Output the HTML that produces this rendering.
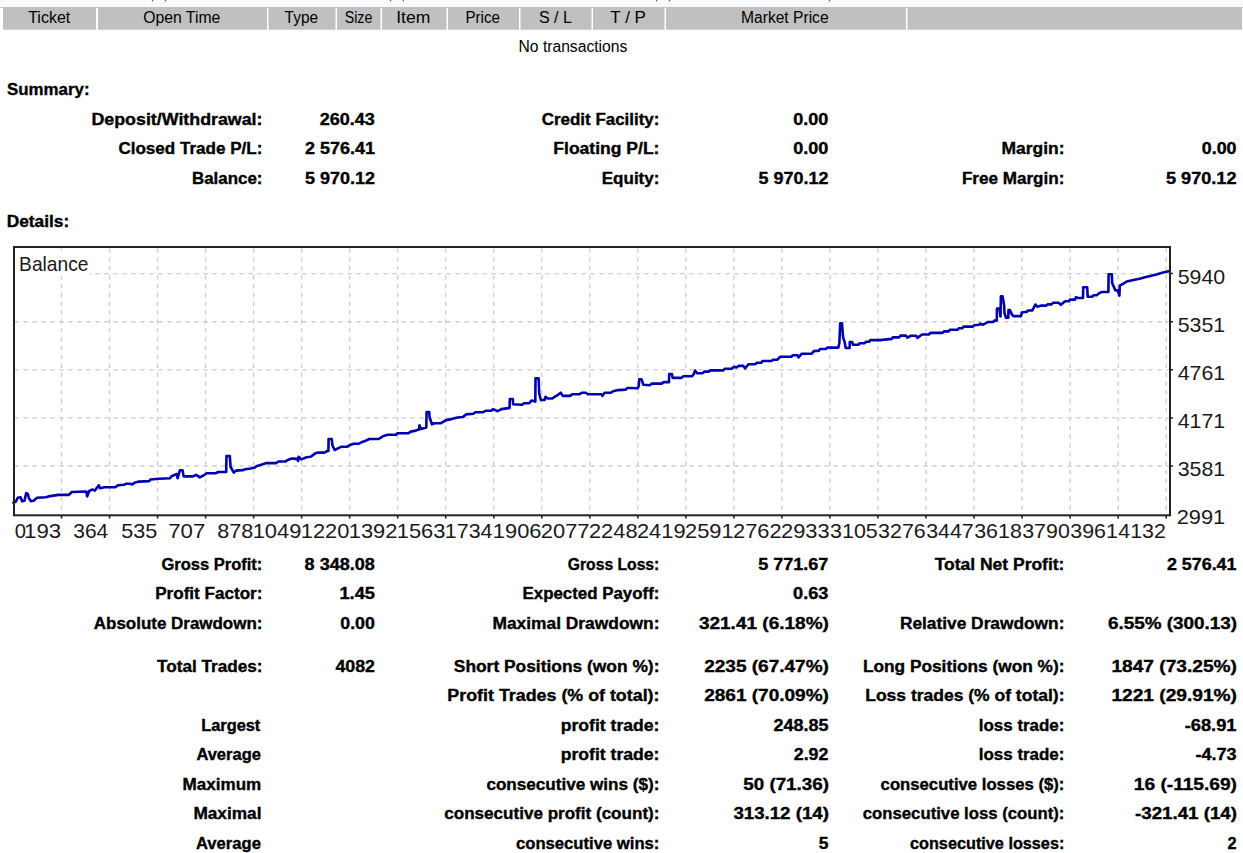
<!DOCTYPE html>
<html><head><meta charset="utf-8"><style>
html,body{margin:0;padding:0;background:#fff;width:1243px;height:853px;overflow:hidden}
svg{display:block;font-family:"Liberation Sans",sans-serif}
</style></head><body>
<svg width="1243" height="853" viewBox="0 0 1243 853">
<rect x="0" y="0" width="1243" height="7" fill="#f8f9fb"/>
<rect x="0" y="7" width="1243" height="1" fill="#c6c6c6"/>
<rect x="151.9" y="0" width="1.2" height="1.3" fill="#555"/>
<rect x="164.9" y="0" width="1.2" height="1.3" fill="#555"/>
<rect x="389.9" y="0" width="1.2" height="1.3" fill="#555"/>
<rect x="402.8" y="0" width="1.2" height="1.3" fill="#555"/>
<rect x="656.0" y="0" width="1.2" height="1.3" fill="#555"/>
<rect x="668.9" y="0" width="1.2" height="1.3" fill="#555"/>
<rect x="828.9" y="0" width="1.2" height="1.3" fill="#555"/>
<rect x="3" y="7" width="93" height="22.7" fill="#c0c0c0"/>
<rect x="98" y="7" width="169" height="22.7" fill="#c0c0c0"/>
<rect x="268.5" y="7" width="67.0" height="22.7" fill="#c0c0c0"/>
<rect x="337" y="7" width="43.5" height="22.7" fill="#c0c0c0"/>
<rect x="382" y="7" width="64.5" height="22.7" fill="#c0c0c0"/>
<rect x="448" y="7" width="71" height="22.7" fill="#c0c0c0"/>
<rect x="520.5" y="7" width="71.0" height="22.7" fill="#c0c0c0"/>
<rect x="593" y="7" width="71.5" height="22.7" fill="#c0c0c0"/>
<rect x="666" y="7" width="240" height="22.7" fill="#c0c0c0"/>
<rect x="907.5" y="7" width="334.5" height="22.7" fill="#c0c0c0"/>
<line x1="61.50" y1="248" x2="61.50" y2="514" stroke="#cecece" stroke-width="1.35" stroke-dasharray="4.43 4.43" stroke-dashoffset="8.45"/>
<line x1="109.53" y1="248" x2="109.53" y2="514" stroke="#cecece" stroke-width="1.35" stroke-dasharray="4.43 4.43" stroke-dashoffset="8.45"/>
<line x1="157.56" y1="248" x2="157.56" y2="514" stroke="#cecece" stroke-width="1.35" stroke-dasharray="4.43 4.43" stroke-dashoffset="8.45"/>
<line x1="205.59" y1="248" x2="205.59" y2="514" stroke="#cecece" stroke-width="1.35" stroke-dasharray="4.43 4.43" stroke-dashoffset="8.45"/>
<line x1="253.62" y1="248" x2="253.62" y2="514" stroke="#cecece" stroke-width="1.35" stroke-dasharray="4.43 4.43" stroke-dashoffset="8.45"/>
<line x1="301.65" y1="248" x2="301.65" y2="514" stroke="#cecece" stroke-width="1.35" stroke-dasharray="4.43 4.43" stroke-dashoffset="8.45"/>
<line x1="349.68" y1="248" x2="349.68" y2="514" stroke="#cecece" stroke-width="1.35" stroke-dasharray="4.43 4.43" stroke-dashoffset="8.45"/>
<line x1="397.71" y1="248" x2="397.71" y2="514" stroke="#cecece" stroke-width="1.35" stroke-dasharray="4.43 4.43" stroke-dashoffset="8.45"/>
<line x1="445.74" y1="248" x2="445.74" y2="514" stroke="#cecece" stroke-width="1.35" stroke-dasharray="4.43 4.43" stroke-dashoffset="8.45"/>
<line x1="493.77" y1="248" x2="493.77" y2="514" stroke="#cecece" stroke-width="1.35" stroke-dasharray="4.43 4.43" stroke-dashoffset="8.45"/>
<line x1="541.80" y1="248" x2="541.80" y2="514" stroke="#cecece" stroke-width="1.35" stroke-dasharray="4.43 4.43" stroke-dashoffset="8.45"/>
<line x1="589.83" y1="248" x2="589.83" y2="514" stroke="#cecece" stroke-width="1.35" stroke-dasharray="4.43 4.43" stroke-dashoffset="8.45"/>
<line x1="637.86" y1="248" x2="637.86" y2="514" stroke="#cecece" stroke-width="1.35" stroke-dasharray="4.43 4.43" stroke-dashoffset="8.45"/>
<line x1="685.89" y1="248" x2="685.89" y2="514" stroke="#cecece" stroke-width="1.35" stroke-dasharray="4.43 4.43" stroke-dashoffset="8.45"/>
<line x1="733.92" y1="248" x2="733.92" y2="514" stroke="#cecece" stroke-width="1.35" stroke-dasharray="4.43 4.43" stroke-dashoffset="8.45"/>
<line x1="781.95" y1="248" x2="781.95" y2="514" stroke="#cecece" stroke-width="1.35" stroke-dasharray="4.43 4.43" stroke-dashoffset="8.45"/>
<line x1="829.98" y1="248" x2="829.98" y2="514" stroke="#cecece" stroke-width="1.35" stroke-dasharray="4.43 4.43" stroke-dashoffset="8.45"/>
<line x1="878.01" y1="248" x2="878.01" y2="514" stroke="#cecece" stroke-width="1.35" stroke-dasharray="4.43 4.43" stroke-dashoffset="8.45"/>
<line x1="926.04" y1="248" x2="926.04" y2="514" stroke="#cecece" stroke-width="1.35" stroke-dasharray="4.43 4.43" stroke-dashoffset="8.45"/>
<line x1="974.07" y1="248" x2="974.07" y2="514" stroke="#cecece" stroke-width="1.35" stroke-dasharray="4.43 4.43" stroke-dashoffset="8.45"/>
<line x1="1022.10" y1="248" x2="1022.10" y2="514" stroke="#cecece" stroke-width="1.35" stroke-dasharray="4.43 4.43" stroke-dashoffset="8.45"/>
<line x1="1070.13" y1="248" x2="1070.13" y2="514" stroke="#cecece" stroke-width="1.35" stroke-dasharray="4.43 4.43" stroke-dashoffset="8.45"/>
<line x1="1118.16" y1="248" x2="1118.16" y2="514" stroke="#cecece" stroke-width="1.35" stroke-dasharray="4.43 4.43" stroke-dashoffset="8.45"/>
<line x1="1166.19" y1="248" x2="1166.19" y2="514" stroke="#cecece" stroke-width="1.35" stroke-dasharray="4.43 4.43" stroke-dashoffset="8.45"/>
<line x1="15" y1="273.60" x2="1169" y2="273.60" stroke="#cecece" stroke-width="1.35" stroke-dasharray="4.5 4.5" stroke-dashoffset="0.75"/>
<line x1="15" y1="321.70" x2="1169" y2="321.70" stroke="#cecece" stroke-width="1.35" stroke-dasharray="4.5 4.5" stroke-dashoffset="0.75"/>
<line x1="15" y1="369.80" x2="1169" y2="369.80" stroke="#cecece" stroke-width="1.35" stroke-dasharray="4.5 4.5" stroke-dashoffset="0.75"/>
<line x1="15" y1="417.90" x2="1169" y2="417.90" stroke="#cecece" stroke-width="1.35" stroke-dasharray="4.5 4.5" stroke-dashoffset="0.75"/>
<line x1="15" y1="466.00" x2="1169" y2="466.00" stroke="#cecece" stroke-width="1.35" stroke-dasharray="4.5 4.5" stroke-dashoffset="0.75"/>
<line x1="61.50" y1="516" x2="61.50" y2="518.5" stroke="#222" stroke-width="1.6"/>
<line x1="109.53" y1="516" x2="109.53" y2="518.5" stroke="#222" stroke-width="1.6"/>
<line x1="157.56" y1="516" x2="157.56" y2="518.5" stroke="#222" stroke-width="1.6"/>
<line x1="205.59" y1="516" x2="205.59" y2="518.5" stroke="#222" stroke-width="1.6"/>
<line x1="253.62" y1="516" x2="253.62" y2="518.5" stroke="#222" stroke-width="1.6"/>
<line x1="301.65" y1="516" x2="301.65" y2="518.5" stroke="#222" stroke-width="1.6"/>
<line x1="349.68" y1="516" x2="349.68" y2="518.5" stroke="#222" stroke-width="1.6"/>
<line x1="397.71" y1="516" x2="397.71" y2="518.5" stroke="#222" stroke-width="1.6"/>
<line x1="445.74" y1="516" x2="445.74" y2="518.5" stroke="#222" stroke-width="1.6"/>
<line x1="493.77" y1="516" x2="493.77" y2="518.5" stroke="#222" stroke-width="1.6"/>
<line x1="541.80" y1="516" x2="541.80" y2="518.5" stroke="#222" stroke-width="1.6"/>
<line x1="589.83" y1="516" x2="589.83" y2="518.5" stroke="#222" stroke-width="1.6"/>
<line x1="637.86" y1="516" x2="637.86" y2="518.5" stroke="#222" stroke-width="1.6"/>
<line x1="685.89" y1="516" x2="685.89" y2="518.5" stroke="#222" stroke-width="1.6"/>
<line x1="733.92" y1="516" x2="733.92" y2="518.5" stroke="#222" stroke-width="1.6"/>
<line x1="781.95" y1="516" x2="781.95" y2="518.5" stroke="#222" stroke-width="1.6"/>
<line x1="829.98" y1="516" x2="829.98" y2="518.5" stroke="#222" stroke-width="1.6"/>
<line x1="878.01" y1="516" x2="878.01" y2="518.5" stroke="#222" stroke-width="1.6"/>
<line x1="926.04" y1="516" x2="926.04" y2="518.5" stroke="#222" stroke-width="1.6"/>
<line x1="974.07" y1="516" x2="974.07" y2="518.5" stroke="#222" stroke-width="1.6"/>
<line x1="1022.10" y1="516" x2="1022.10" y2="518.5" stroke="#222" stroke-width="1.6"/>
<line x1="1070.13" y1="516" x2="1070.13" y2="518.5" stroke="#222" stroke-width="1.6"/>
<line x1="1118.16" y1="516" x2="1118.16" y2="518.5" stroke="#222" stroke-width="1.6"/>
<line x1="1166.19" y1="516" x2="1166.19" y2="518.5" stroke="#222" stroke-width="1.6"/>
<line x1="1171" y1="273.60" x2="1173" y2="273.60" stroke="#222" stroke-width="1.5"/>
<line x1="1171" y1="321.70" x2="1173" y2="321.70" stroke="#222" stroke-width="1.5"/>
<line x1="1171" y1="369.80" x2="1173" y2="369.80" stroke="#222" stroke-width="1.5"/>
<line x1="1171" y1="417.90" x2="1173" y2="417.90" stroke="#222" stroke-width="1.5"/>
<line x1="1171" y1="466.00" x2="1173" y2="466.00" stroke="#222" stroke-width="1.5"/>
<rect x="15" y="250.5" width="74.5" height="25.5" fill="#fff"/>
<polyline points="13.4,502.6 15.8,501.7 17.7,497.8 20.6,497.3 22.1,501.2 24.5,500.7 26.2,493 27.9,494 28.8,497.8 30.8,501.2 33.6,500.7 37,497.8 45.7,497.3 48.6,496.4 58.3,494.9 68.9,494.9 71.8,492 86.3,491.5 87.2,496.4 89.2,491 92,489.6 94.9,490.6 96.9,487.7 98.8,485.3 99.8,488.2 104.6,487.2 115.2,487.2 118.1,485.3 123.9,484.8 125.8,483.8 130,483.8 132.3,484.5 134.4,482.7 139.1,481.6 149.1,481.1 150.6,479.5 158.5,478.7 170,478.3 171.5,476.2 176.8,474 177.6,478.3 179.9,470.3 182.6,470.3 183.6,476.4 193,476.4 196.1,474.8 199.8,477.4 204.5,474.8 206.6,473.2 216,473.2 218.1,472 226.2,472 226.5,456 229.8,456 230.6,467 233.8,472.7 235.9,470.6 243.2,470.1 245.3,469.3 250.5,468.5 255,467.5 256.3,466.2 263.6,464.1 265.7,463.1 276.2,463.1 278.2,461.5 285.6,461.5 287.7,459.9 291.8,458.6 297.1,458.9 298.1,461 298.6,456.8 301.3,459.4 306.5,457.3 310.7,456.8 314.9,453.6 318,452.6 324.3,452.6 327.4,451 328.4,451 328.6,439 331.8,439 332.4,445.3 334.7,450 337.9,448.4 341,446.8 347.3,446.8 349.4,445.3 353.6,443.7 358.8,443.7 361.9,442.1 365.1,441.1 369.2,439 378.7,439 382.8,436.3 387.6,434.7 395.9,434.7 397.5,433.2 408.5,433.2 410.6,431.6 415.8,430.6 418.9,429.5 419.5,425.3 421,429 426.3,427.4 426.6,412 429.2,412 429.6,417.5 432,424.3 434.6,423.2 440.9,423.2 446.1,420.1 451.4,419.1 457.6,417.5 462.9,417 466,414.4 473.3,413.8 475.4,412.3 482.7,412.3 485.9,410.7 491.1,410.7 493.2,409.1 497.4,411.2 501.6,409.1 505,408.6 509.6,407.9 509.8,399 512.8,399 513.1,404.2 522,404.7 524.1,403.2 529.3,403.2 531.4,400.6 535.3,401.6 535.5,378.2 538.6,378.2 539.2,393.2 540.8,400 544.5,400 545.5,396.9 547.6,398.5 552.3,398.5 555.4,396.4 558.1,394.8 560.7,392.7 562.8,395.9 570.1,395.9 572.2,394.3 579.5,394.3 581.6,392.7 585.8,392.7 587.9,394.3 601.5,394.3 602.5,395.9 604.6,392.7 610.9,392.7 613,391.2 618.2,390.1 625.5,389.6 627.6,388 630,388 637.6,388.3 638.8,386 639.2,379.4 641.6,379.4 643.3,384.7 650.1,385.2 651.7,383.6 661.6,383.6 663.7,382.1 669,382.1 669.2,374 672,374 672.6,377.9 681.5,377.9 683.1,376.3 692,376.3 694,373.7 695.1,370.5 697.2,373.2 702.4,373.2 704.5,371.6 708.7,371.6 710.3,370.4 723.3,370.4 724.9,368.7 731.7,368.7 733.8,366.9 736.9,367.4 738.5,365.9 743.2,365.9 745.3,368.3 748.4,364.3 755,364.3 756.8,362.9 761.5,362.6 762.6,361 771.4,361 773,359.8 777.2,359.8 780.3,356.8 791.3,356.8 792.9,355.3 797.6,355.3 798.6,357.4 801.8,353.7 811.7,353.7 813.8,351.1 819,350.6 820.1,349 825.8,349 827.4,347.6 838.4,347.6 839.4,342.7 840.2,323.4 842,323.4 843.1,337.5 844.7,342.2 845.7,348 849.6,348 849.8,342 852.2,342 853,344.8 858.3,344.8 859.8,343.2 864.5,343.2 866.1,341.7 869.2,341.7 870.3,340.1 880,340.1 891.7,338.9 892.8,337.4 899.1,337.4 900.6,335.6 905.9,335.6 907.4,337.7 910.6,335.8 916.3,335.8 917.4,337.9 922.1,334.5 928.9,334.5 930.4,332.9 942.5,332.9 944,331.4 948.7,331.4 949.8,329.7 957.6,329.7 958.7,328.3 962.3,328.3 963.4,326.6 972.8,326.6 974.4,325.3 979.1,324.8 980.1,323.6 982.7,324.8 985.9,323.2 988,322 993.2,322 994.2,320.6 996.2,320.6 996.8,320.5 997,308.6 999.6,308.6 1000.5,316.5 1000.9,296.2 1002.5,296.2 1004.1,305.2 1004.5,313.3 1006.1,317.7 1008.3,317.7 1008.5,310 1009.9,310 1011.7,314.1 1013.3,316.1 1021,316.1 1021.8,312.5 1027,311.7 1027.8,310.5 1032.2,310.5 1033.8,307.6 1035.5,304.5 1037.5,306.8 1040.7,305.6 1046.3,305.6 1047.5,304.4 1051.5,304.4 1053.2,302.8 1058.8,302.8 1060.8,304.8 1063.6,302.4 1065.6,301.2 1068.8,301.2 1070,299.6 1074.9,299.6 1076.1,297.2 1077.7,298 1083,298 1083.2,287.3 1087.2,287.3 1087.7,296.8 1090,296.8 1092.1,296.8 1093.7,295.2 1096.9,295.2 1098.5,293.6 1101.7,292 1108.4,292 1108.6,274.2 1111.8,274.2 1112.2,283.2 1115.4,290.4 1117.8,290.4 1119.4,295.6 1119.8,285.6 1123.4,283.6 1126.7,281.5 1132.3,280.3 1139.5,278.7 1146,277.1 1152.4,275.5 1157.2,274.3 1162.1,272.7 1169.6,271.1" fill="none" stroke="#0000b0" stroke-width="2.6" stroke-linejoin="round" stroke-linecap="round"/>
<rect x="14" y="247" width="1156" height="268.3" fill="none" stroke="#222" stroke-width="2"/>
<text x="28.20" y="22.90" font-size="16" font-weight="normal" fill="#000" textLength="42.05" lengthAdjust="spacingAndGlyphs">Ticket</text>
<text x="143.20" y="22.90" font-size="16" font-weight="normal" fill="#000" textLength="77.10" lengthAdjust="spacingAndGlyphs">Open Time</text>
<text x="284.60" y="22.90" font-size="16" font-weight="normal" fill="#000" textLength="33.50" lengthAdjust="spacingAndGlyphs">Type</text>
<text x="344.70" y="22.90" font-size="16" font-weight="normal" fill="#000" textLength="27.61" lengthAdjust="spacingAndGlyphs">Size</text>
<text x="396.21" y="22.90" font-size="16" font-weight="normal" fill="#000" textLength="34.05" lengthAdjust="spacingAndGlyphs">Item</text>
<text x="465.45" y="22.90" font-size="16" font-weight="normal" fill="#000" textLength="34.45" lengthAdjust="spacingAndGlyphs">Price</text>
<text x="538.90" y="22.90" font-size="16" font-weight="normal" fill="#000" textLength="33.00" lengthAdjust="spacingAndGlyphs">S / L</text>
<text x="610.30" y="22.90" font-size="16" font-weight="normal" fill="#000" textLength="35.71" lengthAdjust="spacingAndGlyphs">T / P</text>
<text x="741.02" y="22.90" font-size="16" font-weight="normal" fill="#000" textLength="87.58" lengthAdjust="spacingAndGlyphs">Market Price</text>
<text x="518.52" y="51.90" font-size="16" font-weight="normal" fill="#000" textLength="108.78" lengthAdjust="spacingAndGlyphs">No transactions</text>
<text x="7.10" y="94.90" font-size="16" font-weight="bold" fill="#000" stroke="#000" stroke-width="0.35" textLength="82.40" lengthAdjust="spacingAndGlyphs">Summary:</text>
<text x="6.72" y="227.00" font-size="16" font-weight="bold" fill="#000" stroke="#000" stroke-width="0.35" textLength="62.41" lengthAdjust="spacingAndGlyphs">Details:</text>
<text x="91.49" y="124.60" font-size="16" font-weight="bold" fill="#000" stroke="#000" stroke-width="0.35" textLength="170.99" lengthAdjust="spacingAndGlyphs">Deposit/Withdrawal:</text>
<text x="319.80" y="124.60" font-size="16" font-weight="bold" fill="#000" stroke="#000" stroke-width="0.35" textLength="55.09" lengthAdjust="spacingAndGlyphs">260.43</text>
<text x="541.80" y="124.60" font-size="16" font-weight="bold" fill="#000" stroke="#000" stroke-width="0.35" textLength="117.61" lengthAdjust="spacingAndGlyphs">Credit Facility:</text>
<text x="793.30" y="124.60" font-size="16" font-weight="bold" fill="#000" stroke="#000" stroke-width="0.35" textLength="35.09" lengthAdjust="spacingAndGlyphs">0.00</text>
<text x="118.40" y="154.00" font-size="16" font-weight="bold" fill="#000" stroke="#000" stroke-width="0.35" textLength="144.02" lengthAdjust="spacingAndGlyphs">Closed Trade P/L:</text>
<text x="305.00" y="154.00" font-size="16" font-weight="bold" fill="#000" stroke="#000" stroke-width="0.35" textLength="69.89" lengthAdjust="spacingAndGlyphs">2 576.41</text>
<text x="553.30" y="154.00" font-size="16" font-weight="bold" fill="#000" stroke="#000" stroke-width="0.35" textLength="106.15" lengthAdjust="spacingAndGlyphs">Floating P/L:</text>
<text x="793.30" y="154.00" font-size="16" font-weight="bold" fill="#000" stroke="#000" stroke-width="0.35" textLength="35.09" lengthAdjust="spacingAndGlyphs">0.00</text>
<text x="1001.51" y="154.00" font-size="16" font-weight="bold" fill="#000" stroke="#000" stroke-width="0.35" textLength="62.94" lengthAdjust="spacingAndGlyphs">Margin:</text>
<text x="1201.80" y="154.00" font-size="16" font-weight="bold" fill="#000" stroke="#000" stroke-width="0.35" textLength="34.69" lengthAdjust="spacingAndGlyphs">0.00</text>
<text x="192.05" y="183.60" font-size="16" font-weight="bold" fill="#000" stroke="#000" stroke-width="0.35" textLength="70.36" lengthAdjust="spacingAndGlyphs">Balance:</text>
<text x="305.00" y="183.60" font-size="16" font-weight="bold" fill="#000" stroke="#000" stroke-width="0.35" textLength="69.89" lengthAdjust="spacingAndGlyphs">5 970.12</text>
<text x="601.74" y="183.60" font-size="16" font-weight="bold" fill="#000" stroke="#000" stroke-width="0.35" textLength="57.68" lengthAdjust="spacingAndGlyphs">Equity:</text>
<text x="758.50" y="183.60" font-size="16" font-weight="bold" fill="#000" stroke="#000" stroke-width="0.35" textLength="69.89" lengthAdjust="spacingAndGlyphs">5 970.12</text>
<text x="961.93" y="183.60" font-size="16" font-weight="bold" fill="#000" stroke="#000" stroke-width="0.35" textLength="102.48" lengthAdjust="spacingAndGlyphs">Free Margin:</text>
<text x="1166.00" y="183.60" font-size="16" font-weight="bold" fill="#000" stroke="#000" stroke-width="0.35" textLength="70.49" lengthAdjust="spacingAndGlyphs">5 970.12</text>
<text x="161.50" y="569.50" font-size="16" font-weight="bold" fill="#000" stroke="#000" stroke-width="0.35" textLength="100.87" lengthAdjust="spacingAndGlyphs">Gross Profit:</text>
<text x="304.60" y="569.50" font-size="16" font-weight="bold" fill="#000" stroke="#000" stroke-width="0.35" textLength="70.29" lengthAdjust="spacingAndGlyphs">8 348.08</text>
<text x="567.80" y="569.50" font-size="16" font-weight="bold" fill="#000" stroke="#000" stroke-width="0.35" textLength="91.50" lengthAdjust="spacingAndGlyphs">Gross Loss:</text>
<text x="758.30" y="569.50" font-size="16" font-weight="bold" fill="#000" stroke="#000" stroke-width="0.35" textLength="70.09" lengthAdjust="spacingAndGlyphs">5 771.67</text>
<text x="934.70" y="569.50" font-size="16" font-weight="bold" fill="#000" stroke="#000" stroke-width="0.35" textLength="129.75" lengthAdjust="spacingAndGlyphs">Total Net Profit:</text>
<text x="1166.90" y="569.50" font-size="16" font-weight="bold" fill="#000" stroke="#000" stroke-width="0.35" textLength="69.59" lengthAdjust="spacingAndGlyphs">2 576.41</text>
<text x="155.23" y="598.90" font-size="16" font-weight="bold" fill="#000" stroke="#000" stroke-width="0.35" textLength="107.18" lengthAdjust="spacingAndGlyphs">Profit Factor:</text>
<text x="339.46" y="598.90" font-size="16" font-weight="bold" fill="#000" stroke="#000" stroke-width="0.35" textLength="35.42" lengthAdjust="spacingAndGlyphs">1.45</text>
<text x="522.55" y="598.90" font-size="16" font-weight="bold" fill="#000" stroke="#000" stroke-width="0.35" textLength="136.85" lengthAdjust="spacingAndGlyphs">Expected Payoff:</text>
<text x="793.10" y="598.90" font-size="16" font-weight="bold" fill="#000" stroke="#000" stroke-width="0.35" textLength="35.28" lengthAdjust="spacingAndGlyphs">0.63</text>
<text x="93.80" y="628.80" font-size="16" font-weight="bold" fill="#000" stroke="#000" stroke-width="0.35" textLength="168.61" lengthAdjust="spacingAndGlyphs">Absolute Drawdown:</text>
<text x="340.30" y="628.80" font-size="16" font-weight="bold" fill="#000" stroke="#000" stroke-width="0.35" textLength="34.59" lengthAdjust="spacingAndGlyphs">0.00</text>
<text x="492.41" y="628.80" font-size="16" font-weight="bold" fill="#000" stroke="#000" stroke-width="0.35" textLength="167.03" lengthAdjust="spacingAndGlyphs">Maximal Drawdown:</text>
<text x="698.90" y="628.80" font-size="16" font-weight="bold" fill="#000" stroke="#000" stroke-width="0.35" textLength="129.99" lengthAdjust="spacingAndGlyphs">321.41 (6.18%)</text>
<text x="899.92" y="628.80" font-size="16" font-weight="bold" fill="#000" stroke="#000" stroke-width="0.35" textLength="164.52" lengthAdjust="spacingAndGlyphs">Relative Drawdown:</text>
<text x="1107.90" y="628.80" font-size="16" font-weight="bold" fill="#000" stroke="#000" stroke-width="0.35" textLength="129.09" lengthAdjust="spacingAndGlyphs">6.55% (300.13)</text>
<text x="157.10" y="671.50" font-size="16" font-weight="bold" fill="#000" stroke="#000" stroke-width="0.35" textLength="105.32" lengthAdjust="spacingAndGlyphs">Total Trades:</text>
<text x="335.40" y="671.50" font-size="16" font-weight="bold" fill="#000" stroke="#000" stroke-width="0.35" textLength="39.49" lengthAdjust="spacingAndGlyphs">4082</text>
<text x="453.80" y="671.50" font-size="16" font-weight="bold" fill="#000" stroke="#000" stroke-width="0.35" textLength="205.64" lengthAdjust="spacingAndGlyphs">Short Positions (won %):</text>
<text x="704.20" y="671.50" font-size="16" font-weight="bold" fill="#000" stroke="#000" stroke-width="0.35" textLength="124.69" lengthAdjust="spacingAndGlyphs">2235 (67.47%)</text>
<text x="862.92" y="671.50" font-size="16" font-weight="bold" fill="#000" stroke="#000" stroke-width="0.35" textLength="201.51" lengthAdjust="spacingAndGlyphs">Long Positions (won %):</text>
<text x="1111.40" y="671.50" font-size="16" font-weight="bold" fill="#000" stroke="#000" stroke-width="0.35" textLength="125.59" lengthAdjust="spacingAndGlyphs">1847 (73.25%)</text>
<text x="447.39" y="701.00" font-size="16" font-weight="bold" fill="#000" stroke="#000" stroke-width="0.35" textLength="212.10" lengthAdjust="spacingAndGlyphs">Profit Trades (% of total):</text>
<text x="704.20" y="701.00" font-size="16" font-weight="bold" fill="#000" stroke="#000" stroke-width="0.35" textLength="124.69" lengthAdjust="spacingAndGlyphs">2861 (70.09%)</text>
<text x="865.21" y="701.00" font-size="16" font-weight="bold" fill="#000" stroke="#000" stroke-width="0.35" textLength="199.25" lengthAdjust="spacingAndGlyphs">Loss trades (% of total):</text>
<text x="1111.40" y="701.00" font-size="16" font-weight="bold" fill="#000" stroke="#000" stroke-width="0.35" textLength="125.59" lengthAdjust="spacingAndGlyphs">1221 (29.91%)</text>
<text x="201.18" y="730.50" font-size="16" font-weight="bold" fill="#000" stroke="#000" stroke-width="0.35" textLength="59.14" lengthAdjust="spacingAndGlyphs">Largest</text>
<text x="560.70" y="730.50" font-size="16" font-weight="bold" fill="#000" stroke="#000" stroke-width="0.35" textLength="98.76" lengthAdjust="spacingAndGlyphs">profit trade:</text>
<text x="773.50" y="730.50" font-size="16" font-weight="bold" fill="#000" stroke="#000" stroke-width="0.35" textLength="54.89" lengthAdjust="spacingAndGlyphs">248.85</text>
<text x="978.84" y="730.50" font-size="16" font-weight="bold" fill="#000" stroke="#000" stroke-width="0.35" textLength="85.56" lengthAdjust="spacingAndGlyphs">loss trade:</text>
<text x="1184.70" y="730.50" font-size="16" font-weight="bold" fill="#000" stroke="#000" stroke-width="0.35" textLength="51.78" lengthAdjust="spacingAndGlyphs">-68.91</text>
<text x="196.40" y="760.00" font-size="16" font-weight="bold" fill="#000" stroke="#000" stroke-width="0.35" textLength="64.50" lengthAdjust="spacingAndGlyphs">Average</text>
<text x="560.70" y="760.00" font-size="16" font-weight="bold" fill="#000" stroke="#000" stroke-width="0.35" textLength="98.76" lengthAdjust="spacingAndGlyphs">profit trade:</text>
<text x="793.80" y="760.00" font-size="16" font-weight="bold" fill="#000" stroke="#000" stroke-width="0.35" textLength="34.59" lengthAdjust="spacingAndGlyphs">2.92</text>
<text x="978.84" y="760.00" font-size="16" font-weight="bold" fill="#000" stroke="#000" stroke-width="0.35" textLength="85.56" lengthAdjust="spacingAndGlyphs">loss trade:</text>
<text x="1195.40" y="760.00" font-size="16" font-weight="bold" fill="#000" stroke="#000" stroke-width="0.35" textLength="41.09" lengthAdjust="spacingAndGlyphs">-4.73</text>
<text x="182.63" y="789.50" font-size="16" font-weight="bold" fill="#000" stroke="#000" stroke-width="0.35" textLength="78.61" lengthAdjust="spacingAndGlyphs">Maximum</text>
<text x="486.40" y="789.50" font-size="16" font-weight="bold" fill="#000" stroke="#000" stroke-width="0.35" textLength="173.02" lengthAdjust="spacingAndGlyphs">consecutive wins ($):</text>
<text x="743.30" y="789.50" font-size="16" font-weight="bold" fill="#000" stroke="#000" stroke-width="0.35" textLength="85.59" lengthAdjust="spacingAndGlyphs">50 (71.36)</text>
<text x="880.60" y="789.50" font-size="16" font-weight="bold" fill="#000" stroke="#000" stroke-width="0.35" textLength="183.79" lengthAdjust="spacingAndGlyphs">consecutive losses ($):</text>
<text x="1133.80" y="789.50" font-size="16" font-weight="bold" fill="#000" stroke="#000" stroke-width="0.35" textLength="103.19" lengthAdjust="spacingAndGlyphs">16 (-115.69)</text>
<text x="193.42" y="819.00" font-size="16" font-weight="bold" fill="#000" stroke="#000" stroke-width="0.35" textLength="68.06" lengthAdjust="spacingAndGlyphs">Maximal</text>
<text x="444.30" y="819.00" font-size="16" font-weight="bold" fill="#000" stroke="#000" stroke-width="0.35" textLength="215.12" lengthAdjust="spacingAndGlyphs">consecutive profit (count):</text>
<text x="733.40" y="819.00" font-size="16" font-weight="bold" fill="#000" stroke="#000" stroke-width="0.35" textLength="95.48" lengthAdjust="spacingAndGlyphs">313.12 (14)</text>
<text x="862.80" y="819.00" font-size="16" font-weight="bold" fill="#000" stroke="#000" stroke-width="0.35" textLength="201.59" lengthAdjust="spacingAndGlyphs">consecutive loss (count):</text>
<text x="1135.00" y="819.00" font-size="16" font-weight="bold" fill="#000" stroke="#000" stroke-width="0.35" textLength="101.98" lengthAdjust="spacingAndGlyphs">-321.41 (14)</text>
<text x="196.00" y="848.50" font-size="16" font-weight="bold" fill="#000" stroke="#000" stroke-width="0.35" textLength="64.89" lengthAdjust="spacingAndGlyphs">Average</text>
<text x="516.00" y="848.50" font-size="16" font-weight="bold" fill="#000" stroke="#000" stroke-width="0.35" textLength="143.38" lengthAdjust="spacingAndGlyphs">consecutive wins:</text>
<text x="818.70" y="848.50" font-size="16" font-weight="bold" fill="#000" stroke="#000" stroke-width="0.35" textLength="9.69" lengthAdjust="spacingAndGlyphs">5</text>
<text x="910.00" y="848.50" font-size="16" font-weight="bold" fill="#000" stroke="#000" stroke-width="0.35" textLength="154.35" lengthAdjust="spacingAndGlyphs">consecutive losses:</text>
<text x="1227.40" y="848.50" font-size="16" font-weight="bold" fill="#000" stroke="#000" stroke-width="0.35" textLength="9.10" lengthAdjust="spacingAndGlyphs">2</text>
<text x="19.09" y="271.30" font-size="21" font-weight="normal" fill="#1a1a1a" textLength="69.33" lengthAdjust="spacingAndGlyphs">Balance</text>
<text x="1177.70" y="283.50" font-size="21" font-weight="normal" fill="#1a1a1a" textLength="47.49" lengthAdjust="spacingAndGlyphs">5940</text>
<text x="1177.70" y="331.60" font-size="21" font-weight="normal" fill="#1a1a1a" textLength="47.49" lengthAdjust="spacingAndGlyphs">5351</text>
<text x="1177.70" y="379.70" font-size="21" font-weight="normal" fill="#1a1a1a" textLength="47.49" lengthAdjust="spacingAndGlyphs">4761</text>
<text x="1177.70" y="427.80" font-size="21" font-weight="normal" fill="#1a1a1a" textLength="47.49" lengthAdjust="spacingAndGlyphs">4171</text>
<text x="1177.70" y="475.90" font-size="21" font-weight="normal" fill="#1a1a1a" textLength="47.49" lengthAdjust="spacingAndGlyphs">3581</text>
<text x="1176.66" y="524.00" font-size="21" font-weight="normal" fill="#1a1a1a" textLength="48.54" lengthAdjust="spacingAndGlyphs">2991</text>
<text x="14.80" y="538.10" font-size="21" font-weight="normal" fill="#1a1a1a" textLength="11.25" lengthAdjust="spacingAndGlyphs">0</text>
<text x="24.14" y="538.10" font-size="21" font-weight="normal" fill="#1a1a1a" textLength="37.08" lengthAdjust="spacingAndGlyphs">193</text>
<text x="73.23" y="538.10" font-size="21" font-weight="normal" fill="#1a1a1a" textLength="34.98" lengthAdjust="spacingAndGlyphs">364</text>
<text x="121.26" y="538.10" font-size="21" font-weight="normal" fill="#1a1a1a" textLength="36.00" lengthAdjust="spacingAndGlyphs">535</text>
<text x="168.23" y="538.10" font-size="21" font-weight="normal" fill="#1a1a1a" textLength="37.08" lengthAdjust="spacingAndGlyphs">707</text>
<text x="217.32" y="538.10" font-size="21" font-weight="normal" fill="#1a1a1a" textLength="36.00" lengthAdjust="spacingAndGlyphs">878</text>
<text x="252.71" y="538.10" font-size="21" font-weight="normal" fill="#1a1a1a" textLength="48.65" lengthAdjust="spacingAndGlyphs">1049</text>
<text x="300.74" y="538.10" font-size="21" font-weight="normal" fill="#1a1a1a" textLength="48.65" lengthAdjust="spacingAndGlyphs">1220</text>
<text x="348.77" y="538.10" font-size="21" font-weight="normal" fill="#1a1a1a" textLength="48.65" lengthAdjust="spacingAndGlyphs">1392</text>
<text x="396.80" y="538.10" font-size="21" font-weight="normal" fill="#1a1a1a" textLength="48.65" lengthAdjust="spacingAndGlyphs">1563</text>
<text x="444.85" y="538.10" font-size="21" font-weight="normal" fill="#1a1a1a" textLength="47.59" lengthAdjust="spacingAndGlyphs">1734</text>
<text x="492.86" y="538.10" font-size="21" font-weight="normal" fill="#1a1a1a" textLength="48.65" lengthAdjust="spacingAndGlyphs">1906</text>
<text x="540.89" y="538.10" font-size="21" font-weight="normal" fill="#1a1a1a" textLength="48.65" lengthAdjust="spacingAndGlyphs">2077</text>
<text x="588.92" y="538.10" font-size="21" font-weight="normal" fill="#1a1a1a" textLength="48.65" lengthAdjust="spacingAndGlyphs">2248</text>
<text x="636.95" y="538.10" font-size="21" font-weight="normal" fill="#1a1a1a" textLength="48.65" lengthAdjust="spacingAndGlyphs">2419</text>
<text x="684.98" y="538.10" font-size="21" font-weight="normal" fill="#1a1a1a" textLength="48.65" lengthAdjust="spacingAndGlyphs">2591</text>
<text x="733.01" y="538.10" font-size="21" font-weight="normal" fill="#1a1a1a" textLength="48.65" lengthAdjust="spacingAndGlyphs">2762</text>
<text x="781.04" y="538.10" font-size="21" font-weight="normal" fill="#1a1a1a" textLength="48.65" lengthAdjust="spacingAndGlyphs">2933</text>
<text x="830.11" y="538.10" font-size="21" font-weight="normal" fill="#1a1a1a" textLength="47.59" lengthAdjust="spacingAndGlyphs">3105</text>
<text x="878.14" y="538.10" font-size="21" font-weight="normal" fill="#1a1a1a" textLength="47.59" lengthAdjust="spacingAndGlyphs">3276</text>
<text x="926.17" y="538.10" font-size="21" font-weight="normal" fill="#1a1a1a" textLength="47.59" lengthAdjust="spacingAndGlyphs">3447</text>
<text x="974.20" y="538.10" font-size="21" font-weight="normal" fill="#1a1a1a" textLength="47.59" lengthAdjust="spacingAndGlyphs">3618</text>
<text x="1022.23" y="538.10" font-size="21" font-weight="normal" fill="#1a1a1a" textLength="47.59" lengthAdjust="spacingAndGlyphs">3790</text>
<text x="1070.26" y="538.10" font-size="21" font-weight="normal" fill="#1a1a1a" textLength="47.59" lengthAdjust="spacingAndGlyphs">3961</text>
<text x="1118.29" y="538.10" font-size="21" font-weight="normal" fill="#1a1a1a" textLength="47.59" lengthAdjust="spacingAndGlyphs">4132</text>
</svg>
</body></html>
